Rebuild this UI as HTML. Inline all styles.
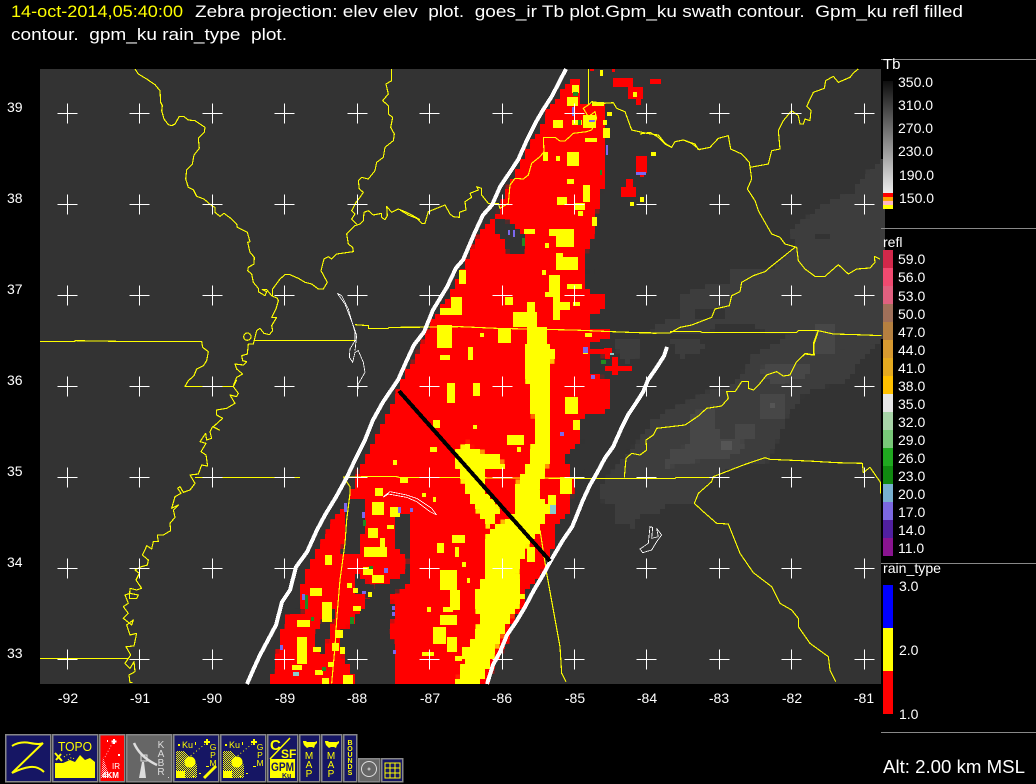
<!DOCTYPE html>
<html><head><meta charset="utf-8"><style>
html,body{margin:0;padding:0;background:#000;width:1036px;height:784px;overflow:hidden}
svg{display:block}
text{font-family:"Liberation Sans",sans-serif;white-space:pre}
.l text{fill:#fff;font-size:14px}
.r text{fill:#fff;font-size:14px}
.y{fill:none;stroke:#ff0;stroke-width:3.4;stroke-linejoin:round;shape-rendering:crispEdges}
.w{fill:none;stroke:#fff;stroke-width:2.4;shape-rendering:crispEdges}
</style></head><body>
<svg width="1036" height="784" viewBox="0 0 1036 784" xmlns="http://www.w3.org/2000/svg">
<defs>
<filter id="px" filterUnits="userSpaceOnUse" x="40" y="69" width="845" height="620" color-interpolation-filters="sRGB">
<feFlood x="42" y="71" width="1" height="1" flood-color="#000"/>
<feComposite x="40" y="69" width="5" height="5"/>
<feTile result="a"/>
<feComposite in="SourceGraphic" in2="a" operator="in"/>
<feMorphology operator="dilate" radius="2"/>
</filter>
<linearGradient id="tb" x1="0" y1="0" x2="0" y2="1"><stop offset="0" stop-color="#0e0e0e"/><stop offset=".5" stop-color="#7e7e7e"/><stop offset="1" stop-color="#ececec"/></linearGradient>
<pattern id="d" width="2" height="2" patternUnits="userSpaceOnUse"><rect width="1" height="1" fill="#ff0"/><rect x="1" y="1" width="1" height="1" fill="#ff0"/></pattern>
<pattern id="dp" width="2" height="2" patternUnits="userSpaceOnUse"><rect width="2" height="2" fill="#f00"/><rect width="1" height="1" fill="#ffb6c1"/><rect x="1" y="1" width="1" height="1" fill="#ffb6c1"/></pattern>
</defs>

<text x="11" y="17" font-size="17" fill="#ff0" textLength="172" lengthAdjust="spacingAndGlyphs">14-oct-2014,05:40:00</text>
<text x="195" y="17" font-size="17" fill="#fff" textLength="768" lengthAdjust="spacingAndGlyphs">Zebra projection: elev elev  plot.  goes_ir Tb plot.Gpm_ku swath contour.  Gpm_ku refl filled</text>
<text x="11" y="40" font-size="17" fill="#fff" textLength="276" lengthAdjust="spacingAndGlyphs">contour.  gpm_ku rain_type  plot.</text>

<rect x="40" y="69" width="841" height="615" fill="#333"/>

<!-- terrain -->
<g filter="url(#px)">
<polygon fill="#3d3d3d" points="650,331 663,322 678,317 678,296 708,286 730,286 732,269 773,269 797,246 790,232 813,212 830,201 853,192 867,172 885,159 885,337 873,337 873,350 857,363 850,380 813,390 803,395 787,417 778,440 773,450 767,462 737,467 713,477 700,493 693,503 670,502 660,512 640,513 633,527 615,522 617,505 598,500 598,487 617,467 627,453 642,437 653,420 670,410 697,397 703,392 727,390 747,367 753,355 777,343 790,335 740,328 680,335"/>
<polygon fill="#3d3d3d" points="617,337 640,337 640,355 625,365 617,350"/>
<polygon fill="#3d3d3d" points="670,340 700,338 705,350 680,358"/>
<polygon fill="#3d3d3d" points="817,322 881,325 881,345 815,356"/>
</g>
<g filter="url(#px)">
<polygon fill="#333" points="815,232 830,232 830,240 815,240"/>
<polygon fill="#333" points="693,309 723,309 723,319 693,319"/>
<polygon fill="#333" points="717,326 753,326 753,335 717,335"/>
<polygon fill="#333" points="772,250 785,248 785,260 772,260"/>
</g>
<g filter="url(#px)">
<polygon fill="#474747" points="690,415 712,405 720,440 742,437 743,450 725,458 690,462 665,468 670,450 690,445"/>
<polygon fill="#474747" points="755,368 775,365 810,365 810,375 775,385"/>
<polygon fill="#474747" points="760,395 785,395 785,420 760,420"/>
<polygon fill="#474747" points="815,322 833,322 833,356 815,356"/>
<polygon fill="#474747" points="735,425 755,425 755,440 735,440"/>
</g>
<rect x="721" y="441" width="11" height="9" fill="#555"/>
<rect x="770" y="403" width="5" height="5" fill="#555"/>

<!-- red -->
<g filter="url(#px)">
<polygon fill="#f00" points="578,78 573,78 565,85 555,102 548,110 540,130 535,137 527,150 520,163 515,175 507,188 502,203 495,218 483,227 477,238 472,248 465,263 457,280 448,297 440,310 433,320 427,333 420,347 415,358 402,380 393,403 383,423 375,437 367,457 358,470 357,480 350,493 347,503 340,513 332,522 325,537 313,557 308,568 300,590 303,613 285,617 282,627 278,650 270,670 270,684 490,684 493,667 507,643 513,620 523,607 527,590 540,577 547,560 557,537 553,528 570,510 573,490 572,455 580,440 582,417 610,410 610,380 590,372 590,353 610,358 610,347 590,347 587,338 610,337 610,330 592,328 592,313 607,310 607,297 590,293 585,287 585,257 595,230 597,212 603,187 603,167 607,147 607,105 592,102 580,105"/>
</g>
<g fill="#f00">
<rect x="613" y="78" width="20" height="9"/><rect x="628" y="87" width="15" height="12"/><rect x="636" y="99" width="5" height="6"/><rect x="650" y="79" width="11" height="5"/><rect x="636" y="156" width="11" height="17"/><rect x="640" y="173" width="4" height="4"/><rect x="626" y="179" width="7" height="8"/><rect x="621" y="187" width="15" height="10"/><rect x="612" y="357" width="6" height="18"/><rect x="605" y="366" width="27" height="5"/><rect x="604" y="348" width="8" height="5"/><rect x="590" y="69" width="4" height="2"/><rect x="612" y="69" width="3" height="3"/><rect x="582" y="337" width="18" height="5"/>
</g>
<!-- holes -->
<g filter="url(#px)" fill="#333">
<polygon points="497,220 510,222 525,235 522,255 508,253 505,240 497,232"/>
<polygon points="408,557 407,573 387,583 373,587 357,573 353,593 370,597 363,607 353,623 340,633 343,657 353,673 355,690 393,690 395,647 387,630 397,613 390,597 408,583"/>
<polygon points="397,513 408,513 408,557 397,550"/>
<polygon points="345,500 363,500 365,527 358,543 358,555 342,555 345,523"/>
<polygon points="335,607 330,633 323,653 315,650 318,627"/>
<polygon points="300,590 300,605 285,615 270,684 250,684 285,590"/>
<polygon points="565,455 585,440 585,470 572,478"/>
<polygon points="590,260 595,255 590,290 585,285"/>
</g>

<!-- yellow -->
<g filter="url(#px)" fill="#ff0">
<polygon points="527,380 535,430 530,460 513,490 513,515 490,530 483,547 487,573 473,597 480,620 470,647 455,684 480,684 497,647 510,620 523,597 517,573 527,547 540,530 550,510 537,490 550,460 548,430 548,380 555,350 540,340 527,345"/>
<polygon points="453,455 470,440 473,450 500,455 505,470 485,470 485,490 500,510 490,530 470,500 462,480"/>
</g>
<g fill="#ff0">
<rect x="572" y="85" width="7" height="8"/><rect x="567" y="97" width="11" height="9"/><rect x="572" y="120" width="10" height="5"/><rect x="553" y="120" width="10" height="8"/><rect x="583" y="115" width="13" height="13"/><rect x="592" y="102" width="12" height="4"/><rect x="603" y="128" width="7" height="10"/><rect x="585" y="138" width="12" height="4"/><rect x="607" y="112" width="5" height="4"/><rect x="603" y="120" width="4" height="5"/><rect x="543" y="152" width="5" height="9"/><rect x="556" y="156" width="4" height="5"/><rect x="567" y="152" width="12" height="14"/><rect x="567" y="179" width="7" height="5"/><rect x="583" y="185" width="7" height="17"/><rect x="557" y="197" width="10" height="8"/><rect x="575" y="203" width="10" height="7"/><rect x="578" y="211" width="5" height="5"/><rect x="592" y="217" width="5" height="9"/><rect x="524" y="229" width="11" height="5"/><rect x="549" y="229" width="7" height="7"/><rect x="556" y="229" width="18" height="18"/><rect x="545" y="243" width="4" height="5"/><rect x="556" y="253" width="7" height="17"/><rect x="563" y="257" width="15" height="13"/><rect x="542" y="270" width="4" height="5"/><rect x="549" y="275" width="11" height="22"/><rect x="567" y="284" width="15" height="5"/><rect x="545" y="292" width="4" height="5"/><rect x="505" y="297" width="8" height="8"/><rect x="440" y="308" width="22" height="7"/><rect x="451" y="297" width="11" height="18"/><rect x="459" y="270" width="7" height="14"/><rect x="553" y="297" width="7" height="23"/><rect x="553" y="302" width="17" height="8"/><rect x="573" y="302" width="7" height="4"/><rect x="437" y="325" width="15" height="23"/><rect x="498" y="328" width="13" height="15"/><rect x="480" y="333" width="4" height="4"/><rect x="468" y="347" width="5" height="13"/><rect x="440" y="355" width="10" height="5"/><rect x="585" y="333" width="7" height="4"/><rect x="583" y="347" width="5" height="7"/>
<rect x="513" y="312" width="24" height="15"/><rect x="527" y="302" width="8" height="10"/><rect x="527" y="327" width="20" height="20"/><rect x="633" y="92" width="4" height="5"/><rect x="651" y="152" width="5" height="4"/><rect x="630" y="202" width="4" height="4"/><rect x="640" y="197" width="4" height="5"/><rect x="600" y="70" width="3" height="6"/>
<rect x="447" y="383" width="8" height="20"/><rect x="473" y="383" width="7" height="13"/><rect x="433" y="420" width="7" height="8"/><rect x="430" y="447" width="7" height="5"/><rect x="393" y="460" width="4" height="5"/><rect x="473" y="425" width="4" height="4"/><rect x="507" y="435" width="17" height="10"/><rect x="517" y="447" width="4" height="5"/><rect x="400" y="478" width="8" height="5"/><rect x="375" y="488" width="8" height="8"/><rect x="372" y="502" width="12" height="13"/><rect x="390" y="507" width="10" height="10"/><rect x="387" y="525" width="7" height="4"/><rect x="368" y="528" width="10" height="10"/><rect x="364" y="547" width="23" height="10"/><rect x="380" y="538" width="5" height="10"/><rect x="363" y="567" width="10" height="8"/><rect x="372" y="575" width="12" height="8"/><rect x="422" y="493" width="4" height="4"/><rect x="433" y="497" width="3" height="5"/><rect x="452" y="535" width="13" height="8"/><rect x="437" y="543" width="7" height="10"/><rect x="455" y="547" width="4" height="10"/><rect x="462" y="562" width="4" height="5"/><rect x="440" y="570" width="17" height="20"/><rect x="450" y="590" width="10" height="20"/><rect x="467" y="578" width="3" height="5"/><rect x="443" y="607" width="10" height="5"/><rect x="427" y="607" width="4" height="5"/><rect x="440" y="615" width="17" height="10"/><rect x="433" y="627" width="13" height="17"/><rect x="447" y="637" width="10" height="15"/><rect x="422" y="652" width="12" height="4"/><rect x="455" y="656" width="7" height="5"/><rect x="462" y="647" width="12" height="12"/><rect x="527" y="547" width="8" height="15"/><rect x="548" y="495" width="8" height="17"/><rect x="560" y="477" width="12" height="17"/><rect x="565" y="397" width="13" height="17"/><rect x="573" y="420" width="7" height="10"/>
<rect x="325" y="555" width="7" height="10"/><rect x="347" y="583" width="5" height="5"/><rect x="353" y="588" width="5" height="5"/><rect x="310" y="588" width="12" height="8"/><rect x="322" y="602" width="10" height="20"/><rect x="353" y="606" width="8" height="5"/><rect x="368" y="592" width="4" height="5"/><rect x="297" y="620" width="13" height="7"/><rect x="297" y="637" width="10" height="27"/><rect x="292" y="665" width="10" height="5"/><rect x="313" y="647" width="8" height="5"/><rect x="332" y="643" width="7" height="8"/><rect x="335" y="630" width="8" height="8"/><rect x="315" y="670" width="8" height="5"/><rect x="322" y="678" width="7" height="6"/><rect x="343" y="675" width="10" height="9"/><rect x="328" y="662" width="5" height="5"/><rect x="340" y="647" width="5" height="7"/>
</g>
<!-- speckle -->
<g fill="#7b68ee">
<rect x="572" y="107" width="3" height="9"/><rect x="589" y="120" width="6" height="2"/><rect x="606" y="145" width="2" height="10"/><rect x="508" y="230" width="2" height="5"/><rect x="513" y="230" width="2" height="7"/><rect x="636" y="172" width="10" height="3"/><rect x="398" y="507" width="3" height="6"/><rect x="344" y="503" width="3" height="9"/><rect x="362" y="512" width="3" height="6"/><rect x="280" y="645" width="3" height="5"/><rect x="384" y="568" width="4" height="5"/><rect x="410" y="508" width="3" height="4"/><rect x="583" y="347" width="5" height="6"/><rect x="591" y="375" width="4" height="4"/><rect x="560" y="432" width="4" height="4"/><rect x="392" y="606" width="3" height="4"/><rect x="392" y="612" width="3" height="4"/><rect x="302" y="594" width="3" height="6"/><rect x="393" y="650" width="3" height="4"/><rect x="362" y="591" width="4" height="3"/></g>
<g fill="#228b22"><rect x="573" y="92" width="5" height="4"/><rect x="522" y="238" width="3" height="8"/><rect x="578" y="120" width="3" height="5"/><rect x="600" y="170" width="2" height="5"/><rect x="305" y="595" width="3" height="14"/><rect x="350" y="617" width="4" height="7"/><rect x="363" y="520" width="3" height="6"/><rect x="369" y="566" width="4" height="3"/><rect x="311" y="617" width="3" height="4"/><rect x="322" y="667" width="4" height="4"/><rect x="601" y="360" width="5" height="4"/></g>
<g fill="#8cc"><rect x="550" y="505" width="6" height="9"/><rect x="293" y="672" width="6" height="4"/><rect x="610" y="353" width="4" height="2"/></g>

<rect x="40" y="684" width="845" height="8" fill="#000"/>

<!-- map lines -->
<g class="y" transform="translate(40,69) scale(.33333)">
<polyline points="285,0 295,15 320,30 345,47 360,65 362,100 367,110 365,125 372,150 385,167 395,170 405,165 418,142 432,143 445,153 465,155 480,165 495,175 493,190 475,208 478,238 462,258 457,285 440,303 437,330 445,355 460,362 470,382 492,390 515,410 525,415 525,430 540,442 552,433 575,450 590,465 592,475 622,490 630,518 623,520 630,550 643,565 642,585 625,595 623,605 635,615 640,640 655,658 655,668 675,680 680,668 667,662 680,662 695,680 712,688 715,695 708,720 695,745 710,745 695,770 698,785 688,797 672,793 660,778 650,785 640,825 625,825 622,855 605,860 608,875 620,878 610,888 585,885 590,900 608,915 590,925 580,950"/>
<circle cx="622" cy="803" r="11"/>
<polyline points="640,814 925,814 945,815"/>
<polyline points="945,767 985,770 985,778 1045,778 1047,775 1140,775"/>
<polyline points="0,818 105,818 105,815 230,817 485,817 488,835 505,848 500,875 490,890 470,900 462,920 445,935 435,952 580,952"/>
<polyline points="698,680 698,660 720,630 735,617 750,617 775,628 795,640 815,645 835,660 850,660 862,640 843,605 852,570 865,563 875,570 890,555 940,548 938,535 925,525 920,495 945,470 960,465 970,455 972,430 985,425 1000,438 1025,433 1025,445 1035,452 1042,440 1040,412 1055,430 1075,420 1100,430 1115,438 1140,452"/>
<polyline points="950,465 935,450 945,435 935,425 948,400 960,385 970,370 958,360 955,335 965,325 985,330 1005,305 1010,280 1030,265 1035,235 1060,215 1063,195 1052,175 1058,145 1045,135 1045,110 1028,95 1045,75 1038,45 1055,35 1055,0"/>
</g>
<g class="y" transform="translate(40,380) scale(.33333)">
<polyline points="590,0 580,20 595,40 590,50 570,45 585,70 560,85 530,90 530,105 548,115 520,140 538,150 518,140 510,155 515,175 500,180 497,160 480,185 498,190 483,215 498,225 503,258 485,255 475,282 450,285 465,310 450,330 430,337 420,320 413,325 423,340 405,350 395,385 415,375 400,390 405,412 390,430 392,452 370,465 352,465 355,485 340,485 335,507 320,497 315,510 307,525 325,540 322,555 305,560 285,570 298,580 288,600 305,625 290,630 270,625 268,655 290,655 295,645 270,640 255,645 265,670 250,680 265,700 250,715 275,735 280,720 260,735 270,765 290,760 282,798 258,800 272,825 255,850 270,865 282,845 285,875 267,885 270,908 278,908"/>
<polyline points="0,835 265,835"/>
<polyline points="465,292 780,292"/>
</g>
<g class="y" transform="translate(240,380) scale(.33333)">
<polyline points="310,292 380,290 470,290 480,293 660,293 1000,295"/>
<polyline points="310,290 330,320 330,340 320,420 315,490 300,600 290,720 285,800 275,910"/>
<polyline points="900,450 920,580 960,800 965,880 978,905"/>
</g>
<g class="y" transform="translate(400,60) scale(.33333)">
<polyline points="0,802 180,800 290,805 420,808 520,810 660,816 770,820"/>
<polyline points="565,27 565,135 550,145 565,170 585,155 590,175 575,210 560,215 520,220 495,243 480,243 465,232 430,232 432,275 420,290 395,310 385,345 370,357 345,355 330,375 325,430 300,445 295,430 265,430 245,405 245,385 230,380 235,390 210,400 215,412 195,425 198,450 178,457 178,472 160,470 150,462 135,435 85,455 75,490 65,490 50,475 25,465 0,450"/>
<polyline points="565,135 575,125 610,130 640,128 650,145 675,155 695,210 740,220 775,225 795,250 815,262 825,245 850,240 875,250 900,270"/>
</g>
<g class="y" transform="translate(640,69) scale(.33333)">
<polyline points="0,195 30,190 55,205 75,225 95,235 105,218 130,213 165,225 175,242 210,235 235,208 265,200 272,240 305,255 328,280 330,295 385,285 395,245 420,240 415,185 430,155 455,125 475,140 480,165 490,165 495,150 510,155 513,125 500,112 513,85 520,70 553,58 557,35 580,22 595,40 630,25 640,12 655,0"/>
<polyline points="330,295 335,330 322,360 345,395 355,425 375,460 395,495 420,505 435,525 470,535 475,575 495,600 525,622 555,622 595,587 625,615 650,600 690,597 705,580 703,562 720,570"/>
<polyline points="465,535 390,595 375,608 340,620 305,640 300,668 275,680 268,710 225,720 215,745 155,768 120,775 90,792 45,792 0,790"/>
<polyline points="90,788 180,787 185,790 470,790 475,785 535,785 580,795 650,797 725,800"/>
<polyline points="535,785 522,825 520,858 495,855 478,870"/>
</g>
<g class="y" transform="translate(570,330) scale(.33333)">
<polyline points="745,0 730,40 733,75 705,70 680,95 660,135 640,138 620,125 590,135 570,160 550,180 535,175 535,155 515,155 495,185 470,185 475,205 455,228 410,235 385,258 345,285 260,295 250,315 228,330 230,360 210,375 185,370 168,385 163,443"/>
<polyline points="932,490 932,458 900,412 880,428 877,400 800,398 715,393 600,388 585,383 520,405 430,440 425,455 385,490 373,520 400,545 440,580 475,582 510,670 550,728 605,770 630,820 665,840 685,865 685,890 720,940 775,980 780,1020 797,1055"/>
<polyline points="0,445 315,445 320,442 430,442"/>
</g>
<g class="w" transform="translate(40,69) scale(.33333)">
<polyline points="892,673 905,680 925,720 945,790 945,815 930,840 928,865 938,880 945,850 955,845 970,880 975,910 955,945 955,960"/>
<polyline points="892,673 915,705 940,770 950,800 945,845"/>
</g>
<g class="w" transform="translate(240,380) scale(.33333)">
<polyline points="430,350 450,335 500,345 530,355 575,385 590,405 570,395 530,365 500,352 445,342 430,352"/>
</g>
<g class="w" transform="translate(570,330) scale(.33333)">
<polygon points="210,657 235,640 240,590 248,592 245,625 265,620 260,595 275,615 260,635 245,660 218,668"/>
</g>

<!-- swath -->
<polyline fill="none" stroke="#fff" stroke-width="4" stroke-linejoin="bevel" shape-rendering="crispEdges" points="566,69 552,96 543,110 536,122 527,140 518,160 508,175 500,187 492,205 483,215 475,232 463,260 456,268 447,287 433,310 424,332 414,345 407,360 398,380 383,402 373,420 365,440 355,460 347,477 336,497 325,515 317,530 307,552 296,567 290,590 282,602 276,625 268,640 260,655 254,668 247,684"/>
<polyline fill="none" stroke="#fff" stroke-width="4" stroke-linejoin="bevel" shape-rendering="crispEdges" points="667,347 664,356 657,367 648,380 643,392 638,400 628,415 622,427 613,447 605,458 597,473 590,485 583,500 577,515 572,527 563,540 550,562 543,575 534,590 525,607 516,622 507,635 500,652 493,665 487,684"/>

<!-- crosses -->
<g stroke="#fff" stroke-width="1" fill="none" shape-rendering="crispEdges" transform="translate(.5,.5)">
<path id="c" d="M57 113h20M67 103v20M129 113h20M139 103v20M202 113h20M212 103v20M274 113h20M284 103v20M347 113h20M357 103v20M419 113h20M429 103v20M492 113h20M502 103v20M564 113h20M574 103v20M636 113h20M646 103v20M709 113h20M719 103v20M781 113h20M791 103v20M854 113h20M864 103v20"/>
<use href="#c" y="91"/><use href="#c" y="182"/><use href="#c" y="273"/><use href="#c" y="364"/><use href="#c" y="455"/><use href="#c" y="546"/>
</g>
<line x1="399" y1="391" x2="550" y2="561" stroke="#000" stroke-width="4" shape-rendering="crispEdges"/>

<!-- axis labels -->
<g class="l" text-anchor="middle">
<text x="68" y="703">-92</text><text x="140" y="703">-91</text><text x="212" y="703">-90</text><text x="285" y="703">-89</text><text x="357" y="703">-88</text><text x="430" y="703">-87</text><text x="502" y="703">-86</text><text x="575" y="703">-85</text><text x="647" y="703">-84</text><text x="719" y="703">-83</text><text x="792" y="703">-82</text><text x="864" y="703">-81</text>
</g>
<g class="l"><text x="7" y="112">39</text><text x="7" y="203">38</text><text x="7" y="294">37</text><text x="7" y="385">36</text><text x="7" y="476">35</text><text x="7" y="567">34</text><text x="7" y="658">33</text></g>

<!-- side -->
<g fill="#888"><rect x="881" y="59" width="155" height="1"/><rect x="881" y="228" width="155" height="1"/><rect x="881" y="563" width="155" height="1"/><rect x="881" y="732" width="155" height="1"/></g>
<rect x="883" y="81" width="10" height="112" fill="url(#tb)"/>
<rect x="883" y="193" width="10" height="4" fill="#f00"/><rect x="883" y="197" width="10" height="4" fill="#ffa500"/><rect x="883" y="201" width="10" height="4" fill="#ffb6c1"/><rect x="883" y="205" width="10" height="4" fill="#ff0"/>
<g class="r">
<text x="883" y="69" style="font-size:15px">Tb</text>
<text x="898" y="87">350.0</text><text x="898" y="110">310.0</text><text x="898" y="133">270.0</text><text x="898" y="156">230.0</text><text x="899" y="180">190.0</text><text x="899" y="203">150.0</text>
<text x="883" y="247" style="font-size:14px">refl</text>
<text x="898" y="264">59.0</text><text x="898" y="282">56.0</text><text x="898" y="301">53.0</text><text x="898" y="319">50.0</text><text x="898" y="337">47.0</text><text x="898" y="355">44.0</text><text x="898" y="373">41.0</text><text x="898" y="391">38.0</text><text x="898" y="409">35.0</text><text x="898" y="427">32.0</text><text x="898" y="445">29.0</text><text x="898" y="463">26.0</text><text x="898" y="481">23.0</text><text x="898" y="499">20.0</text><text x="898" y="517">17.0</text><text x="898" y="535">14.0</text><text x="898" y="553">11.0</text>
<text x="883" y="573" textLength="58" lengthAdjust="spacingAndGlyphs" style="font-size:14px">rain_type</text>
<text x="899" y="591">3.0</text><text x="899" y="655">2.0</text><text x="899" y="719">1.0</text>
</g>
<g shape-rendering="crispEdges">
<rect x="883" y="250" width="10" height="18" fill="#d2284a"/><rect x="883" y="268" width="10" height="18" fill="#f04a70"/><rect x="883" y="286" width="10" height="18" fill="#e0607f"/><rect x="883" y="304" width="10" height="18" fill="#a0705a"/><rect x="883" y="322" width="10" height="18" fill="#b58040"/><rect x="883" y="340" width="10" height="18" fill="#d89a30"/><rect x="883" y="358" width="10" height="18" fill="#e5aa20"/><rect x="883" y="376" width="10" height="18" fill="#ffc000"/><rect x="883" y="394" width="10" height="18" fill="#e6e6e6"/><rect x="883" y="412" width="10" height="18" fill="#a8d4a8"/><rect x="883" y="430" width="10" height="18" fill="#78c878"/><rect x="883" y="448" width="10" height="18" fill="#20a820"/><rect x="883" y="466" width="10" height="18" fill="#108810"/><rect x="883" y="484" width="10" height="18" fill="#78b0d0"/><rect x="883" y="502" width="10" height="18" fill="#7b68e0"/><rect x="883" y="520" width="10" height="18" fill="#5020a0"/><rect x="883" y="538" width="10" height="18" fill="#8a1490"/>
<rect x="883" y="585" width="10" height="43" fill="#00f"/><rect x="883" y="628" width="10" height="43" fill="#ff0"/><rect x="883" y="671" width="10" height="43" fill="#f00"/>
</g>
<text x="883" y="773" font-size="18" fill="#fff" textLength="142" lengthAdjust="spacingAndGlyphs">Alt: 2.00 km MSL</text>

<!-- icons -->
<g stroke="#888" stroke-width="1.5" shape-rendering="crispEdges">
<rect x="5.5" y="734.5" width="45" height="47" fill="#161664"/>
<rect x="52.5" y="734.5" width="45" height="47" fill="#161664"/>
<rect x="99.5" y="734.5" width="25" height="47" fill="#f00"/>
<rect x="126.5" y="734.5" width="45" height="47" fill="#666"/>
<rect x="173.5" y="734.5" width="45" height="47" fill="#161664"/>
<rect x="220.5" y="734.5" width="45" height="47" fill="#161664"/>
<rect x="267.5" y="734.5" width="30" height="47" fill="#161664"/>
<rect x="299.5" y="734.5" width="20" height="47" fill="#161664"/>
<rect x="321.5" y="734.5" width="20" height="47" fill="#161664"/>
<rect x="343.5" y="734.5" width="13" height="47" fill="#161664"/>
<rect x="358.5" y="758.5" width="21" height="23" fill="#666"/>
<rect x="381.5" y="758.5" width="21" height="23" fill="#161664"/>
</g>
<!-- Z -->
<path d="M12 746Q20 741 30 743T43 743L12 773Q22 768 30 767T44 772" fill="none" stroke="#ff0" stroke-width="2"/>
<!-- TOPO -->
<text x="58" y="751" font-size="13" fill="#ff0" textLength="34" lengthAdjust="spacingAndGlyphs">TOPO</text>
<polygon fill="#ff0" points="55,778 55,763 63,763 70,760 75,762 80,755 85,760 90,758 95,762 95,778"/>
<path d="M55 753l7 8M56 760l5-6" stroke="#ff0" stroke-width="2" fill="none"/>
<path d="M64 757q4-4 8-2M68 760q4-4 6-1" stroke="#ff0" stroke-dasharray="1 2" fill="none"/>
<!-- IR -->
<polygon fill="url(#dp)" points="101,778 103,757 110,778"/>
<path d="M105 757L113 742" stroke="#ffb6c1" stroke-dasharray="1 2"/>
<path d="M114 739v5M111.5 741.5h5" stroke="#fff" stroke-width="2"/>
<rect x="118" y="754" width="2" height="2" fill="#fff"/><rect x="107" y="740" width="1" height="2" fill="#fff"/>
<text x="112" y="769" font-size="8" fill="#fff">IR</text><text x="102" y="778" font-size="8" font-weight="bold" fill="#fff">4KM</text>
<!-- KABR -->
<path d="M134 743Q140 757 157 765" fill="none" stroke="#ddd" stroke-width="2.5"/>
<polygon fill="#ddd" points="139,778 146,778 144,762 142,762"/>
<rect x="141" y="755" width="6" height="6" fill="none" stroke="#ddd"/>
<g font-size="10" fill="#ddd" text-anchor="middle"><text x="161" y="748">K</text><text x="161" y="757">A</text><text x="161" y="766">B</text><text x="161" y="775">R</text></g>
<rect x="168" y="777" width="1" height="1" fill="#ddd"/>
<!-- GPM 1,2 -->
<g id="g">
<path d="M176 751h8l13 14v13h-21z" fill="url(#d)"/>
<circle cx="190" cy="762" r="5.5" fill="#ff0"/>
<rect x="176" y="771" width="9" height="7" fill="#ff0"/>
<path d="M188 758L205 744" stroke="#ff0" stroke-dasharray="1 2.5"/>
<path d="M207 739v6M204 742h6" stroke="#ff0" stroke-width="2"/>
<text x="182" y="748" font-size="9" fill="#ff0">Ku</text>
<rect x="178" y="744" width="2" height="2" fill="#ff0"/><rect x="195" y="742" width="1" height="3" fill="#ff0"/>
<g font-size="8.5" fill="#ff0" text-anchor="middle"><text x="213" y="750">G</text><text x="213" y="758">P</text><text x="213" y="766">M</text></g>
<rect x="206" y="766" width="3" height="1" fill="#ff0"/><rect x="199" y="773" width="2" height="1" fill="#ff0"/><rect x="193" y="775" width="1" height="2" fill="#ff0"/>
</g>
<use href="#g" x="47"/>
<path d="M204 778L216 766" stroke="#ff0" stroke-width="3"/>
<!-- CSF -->
<text x="270" y="750" font-size="15" font-weight="bold" fill="#ff0">C</text>
<path d="M270 759L290 738" stroke="#ff0" stroke-width="1.5"/>
<text x="281" y="758" font-size="12" font-weight="bold" fill="#ff0">SF</text>
<rect x="270" y="759" width="25" height="19" fill="#ff0"/>
<text x="271" y="771" font-size="12" font-weight="bold" fill="#161664" textLength="23" lengthAdjust="spacingAndGlyphs">GPM</text>
<text x="282" y="778" font-size="7" font-weight="bold" fill="#161664">Ku</text>
<!-- MAP -->
<path id="us" d="M303 741h3l1 1h8l2-1v2l-2 2-1 3-2-1h-3l-2 1-3-3-1-3z" fill="#ff0"/>
<g font-size="10" fill="#ff0" text-anchor="middle"><text x="309" y="759">M</text><text x="309" y="768">A</text><text x="309" y="777">P</text></g>
<use href="#us" x="22"/>
<g font-size="10" fill="#ff0" text-anchor="middle"><text x="331" y="759">M</text><text x="331" y="768">A</text><text x="331" y="777">P</text></g>
<g font-size="7" font-weight="bold" fill="#ff0" text-anchor="middle"><text x="350" y="745">B</text><text x="350" y="751">O</text><text x="350" y="757">U</text><text x="350" y="763">N</text><text x="350" y="769">D</text><text x="350" y="775">S</text></g>
<!-- circle -->
<circle cx="369" cy="769" r="7.5" fill="none" stroke="#ddd"/><path d="M369 767.5v3M367.5 769h3" stroke="#ddd"/>
<!-- grid -->
<path d="M385 763h15v15h-15zM390 763v15M395 763v15M385 768h15M385 773h15" fill="none" stroke="#ff0" shape-rendering="crispEdges"/>
</svg>
</body></html>
